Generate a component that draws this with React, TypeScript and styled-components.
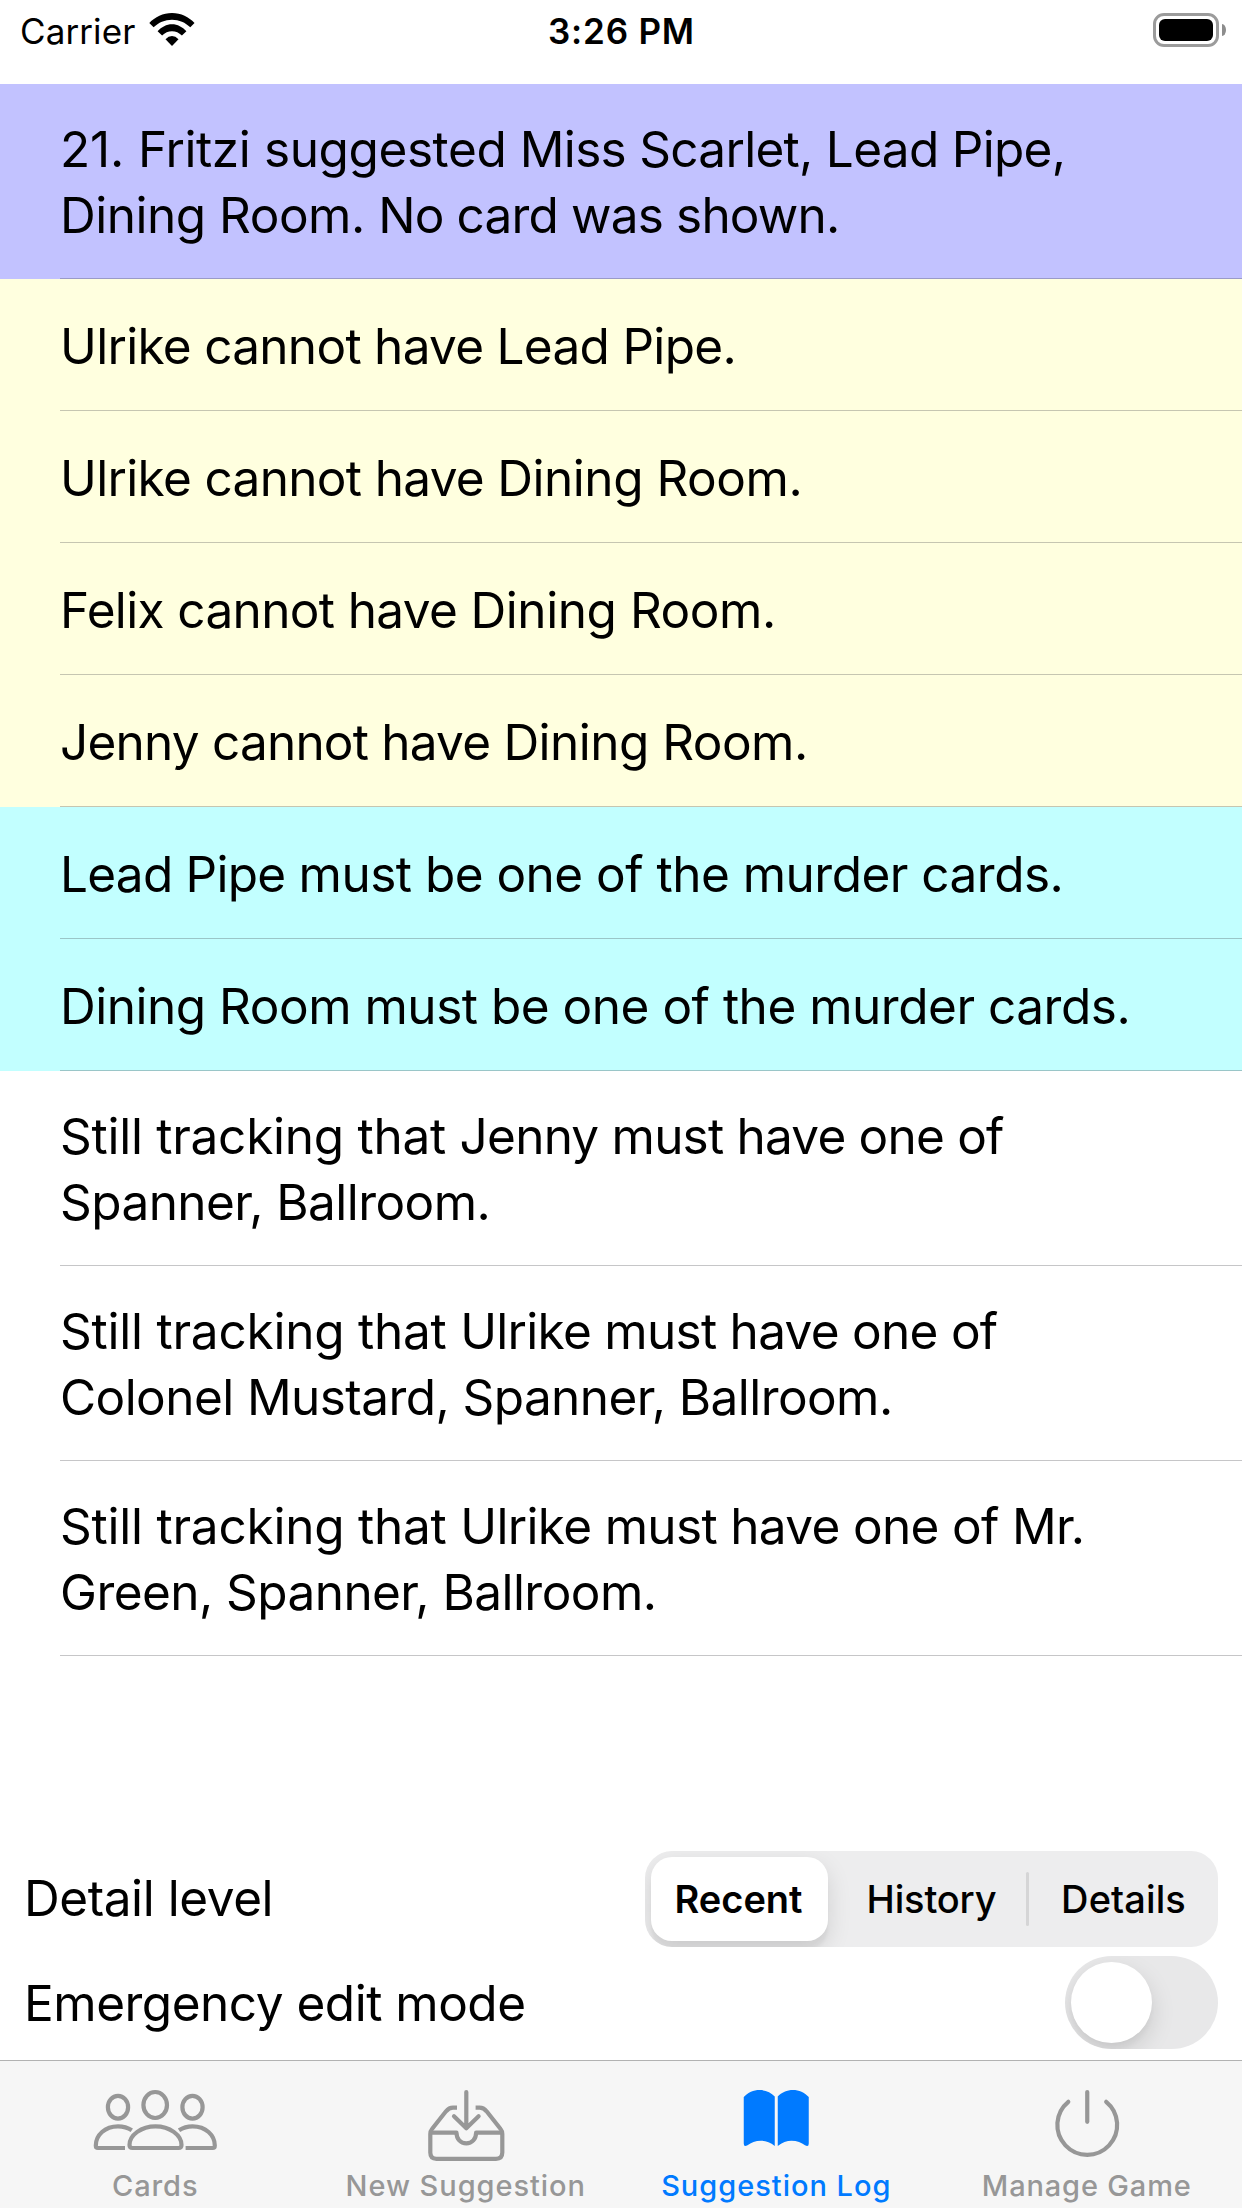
import React, { useState } from 'react';
import styled, { createGlobalStyle, css } from 'styled-components';

const GlobalStyle = createGlobalStyle`
  *, *::before, *::after { box-sizing: border-box; }
  html, body { margin: 0; padding: 0; background: #fff; }
  body { font-family: Inter, "Liberation Sans", sans-serif; color: #000; }
  button { font: inherit; color: inherit; background: none; border: 0; margin: 0; padding: 0; cursor: pointer; }
`;

const Screen = styled.div`
  width: 1242px;
  height: 2208px;
  display: flex;
  flex-direction: column;
  background: #fff;
  overflow: hidden;
`;

/* ---------- status bar ---------- */

const StatusBar = styled.header`
  flex: none;
  height: 84px;
  padding: 10px 16px 33px 20px;
  display: grid;
  grid-template-columns: 1fr auto 1fr;
  align-items: center;
  font-size: 35px;
  line-height: 40px;
`;

const Carrier = styled.div`
  display: flex;
  align-items: center;
  gap: 14px;
  padding-top: 1px;
  letter-spacing: 0.1px;
  svg { display: block; margin-top: -3px; }
`;

const Clock = styled.time`
  padding-top: 1px;
  font-weight: 600;
  letter-spacing: 0.8px;
  margin-right: 3px;
`;

const Battery = styled.div`
  justify-self: end;
  display: flex;
  align-items: center;
  gap: 3px;
  margin-bottom: 1px;
`;

const BatteryShell = styled.div`
  width: 66px;
  height: 34px;
  padding: 3px;
  border: 3px solid #9b9b9b;
  border-radius: 11px;
`;

const BatteryCharge = styled.div`
  width: 100%;
  height: 100%;
  border-radius: 6px;
  background: #000;
`;

const BatteryCap = styled.div`
  width: 4px;
  height: 12px;
  border-radius: 0 4px 4px 0 / 0 6px 6px 0;
  background: #8d8d8d;
`;

/* ---------- log list ---------- */

type Tone = 'suggestion' | 'exclusion' | 'murder' | 'tracking';

const toneColor: Record<Tone, string> = {
  suggestion: '#c2c2ff',
  exclusion: '#ffffdf',
  murder: '#c2ffff',
  tracking: '#ffffff',
};

const LogList = styled.ul`
  flex: 1;
  min-height: 0;
  margin: 0;
  padding: 0;
  list-style: none;
`;

const LogRow = styled.li<{ $tone: Tone }>`
  padding-left: 60px;
  background: ${p => toneColor[p.$tone]};
`;

const LogBody = styled.div<{ $tall: boolean }>`
  height: ${p => (p.$tall ? 195 : 132)}px;
  padding-top: ${p => (p.$tall ? 32 : 34)}px;
  border-bottom: 1px solid rgba(60, 60, 67, 0.29);
`;

const LogLine = styled.div`
  font-size: 49.5px;
  line-height: 66px;
  white-space: pre;
`;

const Run = styled.span<{ $tracking: number }>`
  letter-spacing: ${p => p.$tracking}px;
`;

/* ---------- settings ---------- */

const Settings = styled.section`
  flex: none;
  display: flex;
  flex-direction: column;
  gap: 9px;
  padding: 0 24px 11px;
`;

const SettingRow = styled.div`
  display: flex;
  align-items: center;
  justify-content: space-between;
`;

const SettingLabel = styled.span<{ $tracking: number; $lift?: number }>`
  font-size: 49.5px;
  line-height: 66px;
  letter-spacing: ${p => p.$tracking}px;
  padding-bottom: ${p => p.$lift ?? 0}px;
`;

const Segmented = styled.div`
  width: 573px;
  height: 96px;
  display: flex;
  align-items: center;
  padding-left: 6px;
  border-radius: 27px;
  background: #ededee;
  overflow: hidden;
`;

const Segment = styled.button<{ $selected?: boolean; $inset?: number; $tracking?: number }>`
  flex: 1;
  height: 84px;
  padding-left: ${p => p.$inset ?? 0}px;
  font-size: 38px;
  font-weight: 500;
  letter-spacing: ${p => p.$tracking ?? 0}px;
  text-align: center;
  ${p => p.$selected && css`
    flex: 0 0 177px;
    padding-right: 2px;
    font-weight: 600;
    border-radius: 21px;
    background: #fff;
    box-shadow: 0 9px 24px rgba(0, 0, 0, 0.12), 0 9px 3px rgba(0, 0, 0, 0.04);
  `}
`;

const SegmentDivider = styled.div`
  flex: none;
  width: 3px;
  height: 54px;
  border-radius: 1.5px;
  background: #d5d5d6;
`;

const Toggle = styled.button<{ $on: boolean }>`
  width: 153px;
  height: 93px;
  padding: 6px;
  display: flex;
  justify-content: ${p => (p.$on ? 'flex-end' : 'flex-start')};
  border-radius: 46.5px;
  background: ${p => (p.$on ? '#34c759' : '#e8e8e9')};
  overflow: hidden;
`;

const Knob = styled.span`
  width: 81px;
  height: 81px;
  border-radius: 50%;
  background: #fff;
  box-shadow: 0 9px 24px rgba(0, 0, 0, 0.13), 0 6px 6px rgba(0, 0, 0, 0.03);
`;

/* ---------- tab bar ---------- */

const TabBar = styled.nav`
  flex: none;
  height: 148px;
  display: grid;
  grid-template-columns: repeat(4, 1fr);
  border-top: 1px solid #b2b2b2;
  background: #f6f6f6;
`;

const Tab = styled.button<{ $active?: boolean }>`
  display: flex;
  flex-direction: column;
  align-items: center;
  justify-content: flex-start;
  padding-top: 24px;
  color: ${p => (p.$active ? '#007aff' : '#979797')};
  svg { display: block; flex: none; }
`;

const TabLabel = styled.span<{ $tracking: number }>`
  margin-top: 3px;
  font-size: 29px;
  line-height: 35px;
  font-weight: 500;
  letter-spacing: ${p => p.$tracking}px;
  white-space: nowrap;
`;

const WifiIcon = () => (
  <svg width="46" height="33" viewBox="0 0 46 33" fill="#000">
    <path d="M.3 10C6 4 14 0 23 0s17 4 22.5 10l-4.2 4.3C36.5 9.5 30 6.7 23 6.7S9.3 9.5 4.6 14.3Z" />
    <path d="M8.6 18.3C12.5 14 17.5 11.3 23 11.3s10.5 2.7 14.4 7l-4.5 4.3C30 19.8 26.8 18.3 23 18.3s-7 1.5-9.9 4.3Z" />
    <path d="M16.5 26.3q3-3.4 6.5-3.4t6.5 3.4L23 33Z" />
  </svg>
);

const iconBox = { width: 140, height: 80, viewBox: '0 0 140 80' };
const strokes = {
  fill: 'none',
  stroke: 'currentColor',
  strokeWidth: 4.2,
  strokeLinejoin: 'round' as const,
};

const PeopleIcon = () => (
  <svg {...iconBox} {...strokes}>
    <ellipse cx="33" cy="22.2" rx="10.1" ry="11.4" />
    <ellipse cx="70.2" cy="20" rx="11.8" ry="13" />
    <ellipse cx="107.5" cy="22.2" rx="10.1" ry="11.4" />
    <path d="M47.5 63H93.5Q96.5 63 96.5 60C96.5 50 84.5 41.3 70.5 41.3C56.5 41.3 44.5 50 44.5 60Q44.5 63 47.5 63Z" />
    <path d="M40 63H13Q10.8 63 10.8 60.5C10.8 50 20 41.3 33 41.3C38.5 41.3 43 42.7 46.8 45.2" />
    <path d="M100.6 63H127.6Q129.8 63 129.8 60.5C129.8 50 120.6 41.3 107.6 41.3C102.1 41.3 97.8 42.7 94 45.2" />
  </svg>
);

const InboxIcon = () => (
  <svg {...iconBox} {...strokes}>
    <path d="M61 22.7H57Q53 22.7 50 26.3L36 44Q34.3 46 34.3 49V67.5Q34.3 73.8 40.5 73.8H100Q106.3 73.8 106.3 67.5V49Q106.3 46 104.6 44L90.6 26.3Q87.6 22.7 83.6 22.7H79.6" />
    <path d="M35 47.7H60.5C60.5 54 64.5 58.3 70.3 58.3C76 58.3 80.1 54 80.1 47.7H105.6" />
    <path d="M70.3 7V43.3M58 31.3L70.3 43.3L82.6 31.3" strokeLinecap="round" />
  </svg>
);

const BookIcon = () => (
  <svg {...iconBox} fill="currentColor">
    <path d="M37.75 12C42 7.5 47.5 5 53.5 5C59.5 5 65 7.5 68.75 11.5V61C64.5 57.5 59.5 55.7 55 55.7C49.5 55.7 45 57.5 41.5 60.3Q37.75 62.5 37.75 58.5Z" />
    <path d="M102.75 12C98.5 7.5 93 5 87 5C81 5 75.5 7.5 71.75 11.5V61C76 57.5 81 55.7 85.5 55.7C91 55.7 95.5 57.5 99 60.3Q102.75 62.5 102.75 58.5Z" />
  </svg>
);

const PowerIcon = () => (
  <svg {...iconBox} {...strokes} strokeLinecap="round">
    <path d="M51.3 16.8A29.9 29.9 0 1 0 89.2 16.8" />
    <path d="M70.25 7V36.8" />
  </svg>
);

/* ---------- data ---------- */

/* A line is a list of runs: the text and its letter spacing in pixels. */
type Line = [text: string, tracking: number][];

interface Entry {
  tone: Tone;
  lines: Line[];
}

const entries: Entry[] = [
  {
    tone: 'suggestion',
    lines: [
      [['21. ', -0.1], ['Fritzi suggested ', -0.4], ['Miss Scarlet, Lead Pipe,', -0.7]],
      [['Dining Room. ', -0.485], ['No card was shown.', -0.83]],
    ],
  },
  { tone: 'exclusion', lines: [[['Ulrike cannot have Lead Pipe.', -0.7]]] },
  { tone: 'exclusion', lines: [[['Ulrike cannot have ', -0.66], ['Dining Room.', -0.48]]] },
  { tone: 'exclusion', lines: [[['Felix cannot have ', -0.63], ['Dining Room.', -0.44]]] },
  { tone: 'exclusion', lines: [[['Jenny cannot have ', -0.78], ['Dining Room.', -0.53]]] },
  { tone: 'murder', lines: [[['Lead Pipe ', -0.75], ['must be one of the murder cards.', -0.51]]] },
  { tone: 'murder', lines: [[['Dining Room must be one of the murder cards.', -0.48]]] },
  {
    tone: 'tracking',
    lines: [
      [['Still tracking that ', -0.26], ['Jenny must have one of', -0.78]],
      [['Spanner, Ballroom.', -0.57]],
    ],
  },
  {
    tone: 'tracking',
    lines: [
      [['Still tracking that ', -0.23], ['Ulrike must have one of', -0.71]],
      [['Colonel Mustard, Spanner, Ballroom.', -0.57]],
    ],
  },
  {
    tone: 'tracking',
    lines: [
      [['Still tracking that ', -0.23], ['Ulrike must have one of Mr.', -0.66]],
      [['Green, Spanner, Ballroom.', -0.555]],
    ],
  },
];

const tabs = [
  { label: 'Cards', tracking: 0.9, icon: <PeopleIcon /> },
  { label: 'New Suggestion', tracking: 0.95, icon: <InboxIcon /> },
  { label: 'Suggestion Log', tracking: 0.98, icon: <BookIcon />, active: true },
  { label: 'Manage Game', tracking: 0.85, icon: <PowerIcon /> },
];

export default function App() {
  const [editMode, setEditMode] = useState(false);

  return (
    <>
      <GlobalStyle />
      <Screen>
        <StatusBar>
          <Carrier>
            Carrier
            <WifiIcon />
          </Carrier>
          <Clock>3:26 PM</Clock>
          <Battery>
            <BatteryShell>
              <BatteryCharge />
            </BatteryShell>
            <BatteryCap />
          </Battery>
        </StatusBar>

        <LogList>
          {entries.map((entry, i) => (
            <LogRow key={i} $tone={entry.tone}>
              <LogBody $tall={entry.lines.length > 1}>
                {entry.lines.map((line, n) => (
                  <LogLine key={n}>
                    {line.map(([text, tracking]) => (
                      <Run key={text} $tracking={tracking}>{text}</Run>
                    ))}
                  </LogLine>
                ))}
              </LogBody>
            </LogRow>
          ))}
        </LogList>

        <Settings>
          <SettingRow>
            <SettingLabel $tracking={-0.43} $lift={2}>Detail level</SettingLabel>
            <Segmented>
              <Segment $selected>Recent</Segment>
              <Segment $inset={9} $tracking={-0.15}>History</Segment>
              <SegmentDivider />
              <Segment $tracking={0.1}>Details</Segment>
            </Segmented>
          </SettingRow>
          <SettingRow>
            <SettingLabel $tracking={-0.485}>Emergency edit mode</SettingLabel>
            <Toggle $on={editMode} onClick={() => setEditMode(on => !on)} aria-label="Emergency edit mode">
              <Knob />
            </Toggle>
          </SettingRow>
        </Settings>

        <TabBar>
          {tabs.map(tab => (
            <Tab key={tab.label} $active={tab.active}>
              {tab.icon}
              <TabLabel $tracking={tab.tracking}>{tab.label}</TabLabel>
            </Tab>
          ))}
        </TabBar>
      </Screen>
    </>
  );
}
